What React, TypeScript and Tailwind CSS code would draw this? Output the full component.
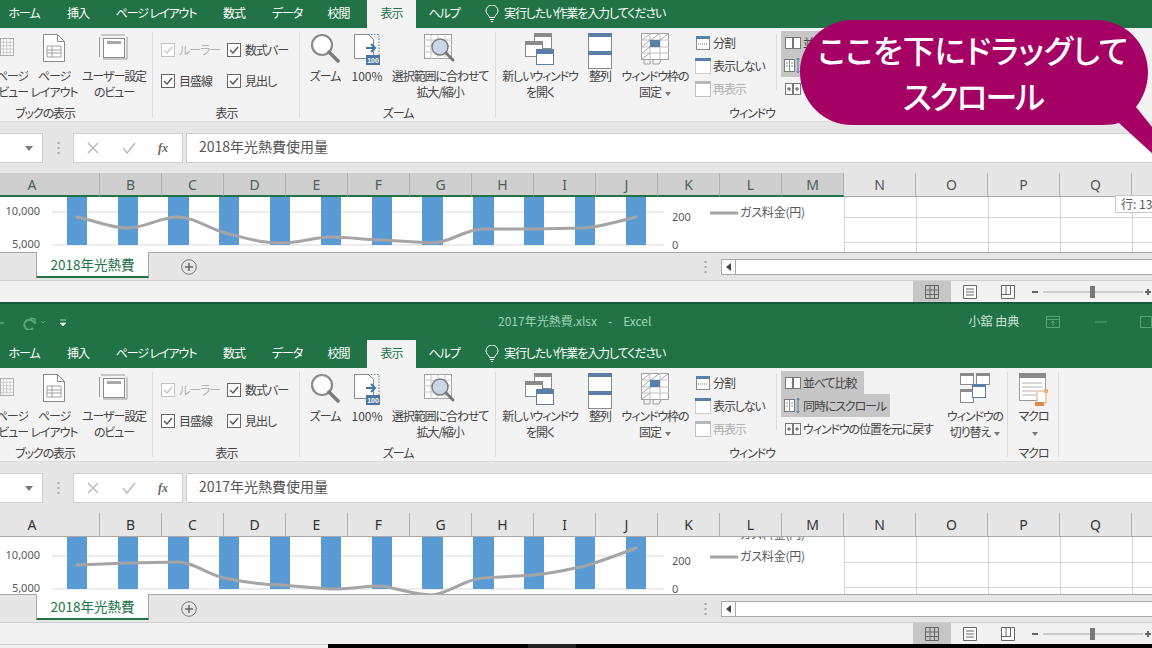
import React from "react";

const B = "#5b7fa6";
const G = "#8a8a8a";

function PageBreakIcon() {
  return (
    <svg width="30" height="28" viewBox="0 0 30 28">
      <rect x="0.5" y="1.5" width="20" height="25" fill="#fff" stroke={G} />
      <path d="M0 7h20M0 12h20M0 17h20M0 22h20M5 2v24M10 2v24M15 2v24" stroke="#b5b5b5" />
    </svg>
  );
}
function PageLayoutIcon() {
  return (
    <svg width="24" height="30" viewBox="0 0 24 30">
      <path d="M1.5 1.5h14l7 7v20h-21z" fill="#fff" stroke={G} />
      <path d="M15.5 1.5v7h7" fill="none" stroke={G} />
      <path d="M5 13h14v11H5zM5 17h14M5 20h14M10 13v11" fill="none" stroke="#a0a0a0" />
    </svg>
  );
}
function CustomViewIcon() {
  return (
    <svg width="30" height="28" viewBox="0 0 30 28">
      <path d="M2 2h24M28 4v22M0.5 4v20M4 26h24" stroke="#9a9a9a" fill="none" />
      <rect x="4.5" y="5.5" width="21" height="19" fill="#fff" stroke="#8a8a8a" />
      <rect x="8" y="8" width="14" height="3" fill="#a8a8a8" />
    </svg>
  );
}
function ZoomIcon() {
  return (
    <svg width="30" height="30" viewBox="0 0 30 30">
      <circle cx="12" cy="12" r="10" fill="#fff" stroke="#8a8a8a" strokeWidth="2.2" />
      <path d="M19 19l9 9" stroke="#7a7a7a" strokeWidth="3.5" strokeLinecap="round" />
    </svg>
  );
}
function Zoom100Icon() {
  return (
    <svg width="28" height="32" viewBox="0 0 28 32">
      <path d="M1.5 1.5h14l5 5v19h-19z" fill="#fff" stroke={G} />
      <path d="M15 1.5h11v21" fill="none" stroke={B} strokeDasharray="1.5 1.5" />
      <path d="M13 15h9M18 11l4 4-4 4" fill="none" stroke="#3f74ad" strokeWidth="2" />
      <rect x="13" y="22" width="14" height="10" fill="#4b76a3" />
      <text x="20" y="30" textAnchor="middle" fontSize="7" fontWeight="700" fill="#fff" fontFamily="Liberation Sans">100</text>
    </svg>
  );
}
function ZoomSelIcon() {
  return (
    <svg width="32" height="30" viewBox="0 0 32 30">
      <rect x="0.5" y="1.5" width="27" height="24" fill="#fff" stroke="#a0a0a0" />
      <path d="M0 7h28M0 13h28M0 19h28M7 2v24M14 2v24M21 2v24" stroke="#c8c8c8" />
      <circle cx="16" cy="14" r="8" fill="#c7d3e5" fillOpacity="0.9" stroke="#7a7a7a" strokeWidth="1.5" />
      <path d="M22 20l7 7" stroke="#777" strokeWidth="3" strokeLinecap="round" />
    </svg>
  );
}
function NewWindowIcon() {
  return (
    <svg width="30" height="32" viewBox="0 0 30 32">
      <rect x="9.5" y="0.5" width="17" height="15" fill="#fff" stroke="#8a8a8a" />
      <rect x="9" y="0" width="18" height="4" fill="#8a8a8a" />
      <rect x="0.5" y="8.5" width="17" height="15" fill="#fff" stroke="#8a8a8a" />
      <rect x="0" y="8" width="18" height="4" fill="#8a8a8a" />
      <rect x="11.5" y="16.5" width="17" height="15" fill="#fff" stroke={B} />
      <rect x="11" y="16" width="18" height="5" fill={B} />
    </svg>
  );
}
function ArrangeIcon() {
  return (
    <svg width="24" height="36" viewBox="0 0 24 36">
      <rect x="0.5" y="0.5" width="23" height="35" fill="#fff" stroke="#8a8a8a" />
      <rect x="0" y="0" width="24" height="4" fill={B} />
      <rect x="0" y="18" width="24" height="4" fill={B} />
    </svg>
  );
}
function FreezeIcon() {
  return (
    <svg width="28" height="32" viewBox="0 0 28 32">
      <rect x="0.5" y="0.5" width="27" height="26" fill="#fff" stroke="#a0a0a0" />
      <path d="M0 7h28M0 14h28M0 20h28M9 0v27M19 0v27" stroke="#c0c0c0" />
      <path d="M1 7l8-6M1 14l8-7M1 20l8-6M1 26l8-6M10 7l8-6M19 7l8-6" stroke="#a8a8a8" />
      <rect x="9" y="7" width="10" height="7" fill={B} />
      <path d="M3 27v4h6v-4M12 27v4h6l2-4" fill="none" stroke="#a0a0a0" />
    </svg>
  );
}
function SwitchIcon() {
  return (
    <svg width="30" height="30" viewBox="0 0 30 30">
      <rect x="0.5" y="0.5" width="13" height="11" fill="#fff" stroke="#8a8a8a" />
      <rect x="0" y="0" width="14" height="3" fill="#8a8a8a" />
      <rect x="16.5" y="0.5" width="13" height="11" fill="#fff" stroke="#8a8a8a" />
      <rect x="16" y="0" width="14" height="3" fill="#8a8a8a" />
      <rect x="0.5" y="16.5" width="13" height="13" fill="#fff" stroke="#8a8a8a" />
      <rect x="0" y="16" width="14" height="3" fill="#8a8a8a" />
      <rect x="12.5" y="11.5" width="13" height="13" fill="#fff" stroke={B} />
      <rect x="12" y="11" width="14" height="3" fill={B} />
    </svg>
  );
}
function MacroIcon() {
  return (
    <svg width="30" height="34" viewBox="0 0 30 34">
      <rect x="0.5" y="0.5" width="26" height="27" fill="#fff" stroke="#9a9a9a" />
      <rect x="0" y="0" width="27" height="5" fill="#8a8a8a" />
      <path d="M3 10h20M3 14h20M3 18h14M3 22h14" stroke="#b0b0b0" />
      <path d="M18 18h9v12h-9z" fill="#fff" stroke="#e2a471" />
      <path d="M16 29h9v4h-9z" fill="#d98a4c" />
      <path d="M25 16h4v4h-4z" fill="#eab184" />
    </svg>
  );
}

function Small({ kind }: { kind: string }) {
  if (kind === "split")
    return (
      <svg width="14" height="14" viewBox="0 0 14 14">
        <rect x="0.5" y="0.5" width="13" height="13" fill="#fff" stroke="#8a8a8a" />
        <rect x="0" y="0" width="14" height="3" fill={B} />
        <path d="M2 8h10" stroke="#777" strokeDasharray="1 1" />
      </svg>
    );
  if (kind === "hide")
    return (
      <svg width="16" height="16" viewBox="0 0 16 16">
        <rect x="0.5" y="0.5" width="15" height="15" fill="#fff" stroke="#a0a0a0" strokeDasharray="1 1" />
        <rect x="0" y="0" width="16" height="3" fill={B} />
      </svg>
    );
  if (kind === "show")
    return (
      <svg width="16" height="16" viewBox="0 0 16 16">
        <rect x="0.5" y="0.5" width="15" height="15" fill="#fff" stroke="#c0c0c0" />
        <rect x="0" y="0" width="16" height="3" fill="#b8b8b8" />
      </svg>
    );
  if (kind === "compare")
    return (
      <svg width="16" height="13" viewBox="0 0 16 13">
        <rect x="0.5" y="1.5" width="7" height="11" fill="#fff" stroke="#777" />
        <rect x="8.5" y="1.5" width="7" height="11" fill="#fff" stroke="#777" />
      </svg>
    );
  if (kind === "sync")
    return (
      <svg width="17" height="17" viewBox="0 0 17 17">
        <rect x="0.5" y="2.5" width="10" height="12" fill="#fff" stroke="#777" />
        <path d="M5.5 3v11M2 6h2M2 9h2M7 6h2M7 9h2" stroke="#888" />
        <path d="M14 1v15M12.5 3L14 1l1.500 2M12.500 14l1.500 2 1.500-2" fill="none" stroke="#4f7eae" />
      </svg>
    );
  return (
    <svg width="16" height="13" viewBox="0 0 16 13">
      <rect x="0.5" y="1.5" width="7" height="11" fill="#fff" stroke="#777" />
      <rect x="8.5" y="1.5" width="7" height="11" fill="#fff" stroke="#777" />
      <path d="M2 7h4M4 5v4M10 7h4M12 5v4" stroke="#555" />
    </svg>
  );
}

function Big({ w, icon, lines }: { w: string; icon: React.ReactNode; lines: React.ReactNode[] }) {
  return (
    <div className={`${w} shrink-0 flex flex-col items-center pt-[5px]`}>
      <div className="h-[35px] flex items-start justify-center">{icon}</div>
      <div className="text-[12px] leading-[16px] tracking-[-1.1px] text-center text-[#444] whitespace-nowrap">
        {lines.map((l, i) => (
          <div key={i}>{l}</div>
        ))}
      </div>
    </div>
  );
}

function Check({ label, disabled }: { label: string; disabled?: boolean }) {
  return (
    <div className={`flex items-center gap-[4px] text-[12px] tracking-[-1px] ${disabled ? "text-[#b4b4b4]" : "text-[#444]"}`}>
      <svg width="14" height="14" viewBox="0 0 14 14">
        <rect x="0.5" y="0.5" width="13" height="13" fill="#fff" stroke={disabled ? "#c4c4c4" : "#666"} />
        <path d="M3 7l3 3 5-6" fill="none" stroke={disabled ? "#c4c4c4" : "#555"} strokeWidth="1.4" />
      </svg>
      <span>{label}</span>
    </div>
  );
}

function Group({ w, caption, children, capClass = "" }: { w: string; caption: string; children: React.ReactNode; capClass?: string }) {
  return (
    <div className={`${w} shrink-0 h-[94px] relative flex flex-col`}>
      <div className="flex-1 flex min-h-0">{children}</div>
      <div className={`h-[18px] text-[12px] leading-[18px] tracking-[-1.1px] text-center text-[#444] ${capClass}`}>{caption}</div>
      <div className="absolute right-0 top-[4px] bottom-[5px] w-px bg-[#dcdcdc]" />
    </div>
  );
}

function Row({ kind, label, muted, hl, pad }: { kind: string; label: string; muted?: boolean; hl?: string; pad?: string }) {
  return (
    <div className={`h-[23px] flex items-center gap-[2px] text-[12px] tracking-[-1.1px] whitespace-nowrap ${pad ?? "pl-[3px]"} ${muted ? "text-[#b0b0b0]" : "text-[#444]"} ${hl ?? ""}`}>
      <span className="w-[17px] flex justify-center">
        <Small kind={kind} />
      </span>
      {label}
    </div>
  );
}

const Caret = () => (
  <svg width="6" height="4" viewBox="0 0 6 4" className="inline-block ml-[4px] align-middle">
    <path d="M0 0h6L3 4z" fill="#777" />
  </svg>
);

function Ribbon() {
  return (
    <div className="h-[94px] bg-[#f3f3f3] border-b border-[#dcdcdc] flex overflow-hidden">
      <Group w="w-[153px]" caption="ブックの表示" capClass="pr-[63px]">
        <div className="w-[28px] shrink-0 pt-[5px] flex flex-col items-end overflow-hidden">
          <div className="h-[35px] w-[28px] flex justify-end pr-[8px]"><PageBreakIcon /></div>
          <div className="text-[12px] leading-[16px] tracking-[-1.1px] text-right text-[#444] whitespace-nowrap">
            <div>ページ</div>
            <div>プレビュー</div>
          </div>
        </div>
        <Big w="w-[52px]" icon={<PageLayoutIcon />} lines={["ページ", "レイアウト"]} />
        <Big w="w-[68px]" icon={<CustomViewIcon />} lines={["ユーザー設定", "のビュー"]} />
      </Group>
      <Group w="w-[147px]" caption="表示">
        <div className="grid grid-cols-[66px_auto] grid-rows-[31px_31px] items-center pl-[8px] pt-[6px]">
          <Check label="ルーラー" disabled />
          <Check label="数式バー" />
          <Check label="目盛線" />
          <Check label="見出し" />
        </div>
      </Group>
      <Group w="w-[196px]" caption="ズーム">
        <Big w="w-[50px]" icon={<ZoomIcon />} lines={["ズーム"]} />
        <Big w="w-[34px]" icon={<Zoom100Icon />} lines={[<span key="p" className="tracking-normal">100%</span>]} />
        <Big w="w-[112px]" icon={<ZoomSelIcon />} lines={["選択範囲に合わせて", "拡大/縮小"]} />
      </Group>
      <Group w="w-[512px]" caption="ウィンドウ">
        <Big w="w-[88px]" icon={<NewWindowIcon />} lines={["新しいウィンドウ", "を開く"]} />
        <Big w="w-[32px]" icon={<ArrangeIcon />} lines={["整列"]} />
        <Big w="w-[78px]" icon={<FreezeIcon />} lines={["ウィンドウ枠の", <span key="k">固定<Caret /></span>]} />
        <div className="w-[82px] shrink-0 pt-[3px]">
          <Row kind="split" label="分割" pad="pl-0" />
          <Row kind="hide" label="表示しない" pad="pl-0" />
          <Row kind="show" label="再表示" muted pad="pl-0" />
        </div>
        <div className="w-px h-[56px] mt-[6px] bg-[#dcdcdc] mr-[4px]" />
        <div className="w-[161px] shrink-0 pt-[3px] flex flex-col items-start">
          <Row kind="compare" label="並べて比較" hl="bg-[#c6c6c6] pr-[8px]" />
          <Row kind="sync" label="同時にスクロール" hl="bg-[#c6c6c6] pr-[4px]" />
          <Row kind="restore" label="ウィンドウの位置を元に戻す" />
        </div>
        <div className="w-[66px] shrink-0 flex">
          <Big w="w-[66px]" icon={<SwitchIcon />} lines={["ウィンドウの", <span key="k">切り替え<Caret /></span>]} />
        </div>
      </Group>
      <Group w="w-[51px]" caption="マクロ">
        <Big w="w-[51px]" icon={<MacroIcon />} lines={["マクロ", <Caret key="a" />]} />
      </Group>
    </div>
  );
}

function Tabs() {
  const items: [string, string][] = [
    ["ホーム", "w-[48px]"],
    ["挿入", "w-[60px]"],
    ["ページ レイアウト", "w-[96px]"],
    ["数式", "w-[60px]"],
    ["データ", "w-[46px]"],
    ["校閲", "w-[57px]"],
    ["表示", "w-[49px]"],
    ["ヘルプ", "w-[56px]"],
  ];
  return (
    <div className="h-[28px] bg-[#217346] flex items-stretch text-[12px] tracking-[-1.1px] text-white">
      {items.map(([t, w]) => (
        <div
          key={t}
          className={`${w} shrink-0 flex items-center justify-center whitespace-nowrap pb-[2px] ${t === "表示" ? "bg-[#f3f3f3] text-[#217346]" : ""}`}
        >
          {t}
        </div>
      ))}
      <div className="flex items-center gap-[5px] ml-[13px] pb-[2px]">
        <svg width="14" height="17" viewBox="0 0 14 17">
          <path d="M4.500 12.500c0-2-3.500-3.500-3.500-6.500a6 6 0 0 1 12 0c0 3-3.500 4.500-3.500 6.500z" fill="none" stroke="#fff" />
          <path d="M5 14.500h4M6 16.500h2" stroke="#fff" />
        </svg>
        <span>実行したい作業を入力してください</span>
      </div>
    </div>
  );
}

function FormulaBar({ text }: { text: string }) {
  return (
    <div className="h-[51px] bg-[#e6e6e6] pt-[11px] flex items-start">
      <div className="w-[43px] h-[30px] bg-white border border-l-0 border-[#cfcfcf] flex items-center justify-end pr-[9px]">
        <svg width="8" height="5" viewBox="0 0 8 5"><path d="M0 0h8L4 5z" fill="#777" /></svg>
      </div>
      <div className="w-[30px] h-[30px] flex items-center justify-center">
        <svg width="3" height="12" viewBox="0 0 3 12">
          <path d="M1.500 0v2M1.500 5v2M1.500 10v2" stroke="#a8a8a8" strokeWidth="2" />
        </svg>
      </div>
      <div className="w-[110px] h-[30px] bg-white border border-[#cfcfcf] flex items-center text-[#b8b8b8]">
        <span className="w-[38px] flex justify-center">
          <svg width="12" height="12" viewBox="0 0 12 12"><path d="M1 1l10 10M11 1L1 11" stroke="#bcbcbc" strokeWidth="1.500" /></svg>
        </span>
        <span className="w-[34px] flex justify-center">
          <svg width="14" height="12" viewBox="0 0 14 12"><path d="M1 6l4 5 8-10" fill="none" stroke="#bcbcbc" strokeWidth="1.500" /></svg>
        </span>
        <span className="w-[34px] text-center text-[12px] italic font-['Liberation_Serif',serif] font-bold text-[#666]">fx</span>
      </div>
      <div className="flex-1 ml-[3px] h-[30px] bg-white border border-r-0 border-[#cfcfcf] flex items-center pl-[12px] pb-[3px] text-[14px] text-[#555]">
        {text}
      </div>
    </div>
  );
}

const ColsA = ["B", "C", "D", "E", "F", "G", "H", "I", "J", "K", "L", "M"];
const ColsB = ["N", "O", "P", "Q", ""];

function ColHeaders({ active }: { active: boolean }) {
  const sel = active ? "bg-[#cfcfcf] text-[#4d615b] border-b-2 border-b-[#217346]" : "bg-[#e6e6e6] text-[#333] border-b border-b-[#a8a8a8]";
  return (
    <div className="h-[24px] flex text-[14px] font-['Noto_Sans',sans-serif] overflow-hidden">
      <div className={`w-[135px] -ml-[35px] shrink-0 border-r border-r-[#b0b0b0] flex items-center justify-center ${sel}`}>A</div>
      {ColsA.map((c) => (
        <div key={c} className={`w-[62px] shrink-0 border-r border-r-[#b0b0b0] flex items-center justify-center ${sel}`}>{c}</div>
      ))}
      {ColsB.map((c, i) => (
        <div key={i} className={`w-[72px] shrink-0 bg-[#e6e6e6] border-r border-r-[#b0b0b0] border-b border-b-[#a8a8a8] flex items-center justify-center ${active ? "text-[#555]" : "text-[#333]"}`}>{c}</div>
      ))}
    </div>
  );
}

const bars: [number, number][] = [[67, 20], [118, 20], [168, 21], [219, 20], [270, 20], [321, 20], [372, 20], [422, 21], [473, 21], [524, 20], [575, 20], [626, 20]];

function Chart({ h, gy1, gy2, line, ghost }: { h: number; gy1: number; gy2: number; line: string; ghost?: boolean }) {
  return (
    <svg width="844" height={h} viewBox={`0 0 844 ${h}`} className="block shrink-0" fontFamily="'Noto Sans','Noto Sans CJK JP',sans-serif">
      <rect width="844" height={h} fill="#fff" />
      <path d={`M52 ${gy1}H664M52 ${gy2}H664`} stroke="#d9d9d9" />
      {bars.map(([x, w]) => (
        <rect key={x} x={x} y="0" width={w} height={gy2} fill="#5b9bd5" />
      ))}
      <path d={line} fill="none" stroke="#a5a5a5" strokeWidth="3" strokeLinejoin="round" strokeLinecap="round" />
      <text x="40" y={gy1 + 3} textAnchor="end" fontSize="11" fill="#595959">10,000</text>
      <text x="40" y={gy2 + 3} textAnchor="end" fontSize="11" fill="#595959">5,000</text>
      <text x="672" y={gy1 + 9} fontSize="11" fill="#595959">200</text>
      <text x="672" y={gy2 + 4} fontSize="11" fill="#595959">0</text>
      <path d={`M710 ${gy1 + 1}h28`} stroke="#a5a5a5" strokeWidth="3" />
      <text x="740" y={gy1 + 5} fontSize="12" letterSpacing="-0.2" fill="#595959" fontFamily="'Noto Sans CJK JP',sans-serif">ガス料金(円)</text>
      {ghost && <text x="740" y="2" fontSize="12" letterSpacing="-0.2" fill="#595959" fontFamily="'Noto Sans CJK JP',sans-serif">ガス料金(円)</text>}
    </svg>
  );
}

function Grid({ h, y1, y2 }: { h: number; y1: number; y2: number }) {
  return (
    <div className="flex-1 flex bg-white overflow-hidden border-l border-[#d4d4d4]" style={{ height: h }}>
      {[0, 1, 2, 3, 4].map((i) => (
        <div key={i} className="w-[72px] shrink-0 border-r border-[#d4d4d4] relative">
          <div className="absolute left-0 right-0 h-px bg-[#d4d4d4]" style={{ top: y1 }} />
          <div className="absolute left-0 right-0 h-px bg-[#d4d4d4]" style={{ top: y2 }} />
        </div>
      ))}
    </div>
  );
}

function SheetTabs({ h }: { h: number }) {
  return (
    <div className="bg-[#e6e6e6] border-t border-b border-[#a8a8a8] border-b-[#cfcfcf] flex items-start box-border" style={{ height: h }}>
      <div className="ml-[36px] w-[111px] h-[24px] -mt-px bg-white border-l border-r border-[#a8a8a8] border-b-2 border-b-[#217346] text-[13.5px] text-[#217346] flex items-center justify-center box-content">
        2018年光熱費
      </div>
      <div className="ml-[32px] mt-[6px]">
        <svg width="16" height="16" viewBox="0 0 16 16">
          <circle cx="8" cy="8" r="7.300" fill="none" stroke="#777" />
          <path d="M4 8h8M8 4v8" stroke="#666" strokeWidth="1.500" />
        </svg>
      </div>
      <div className="ml-[507px] mt-[8px]">
        <svg width="3" height="12" viewBox="0 0 3 12">
          <path d="M1.500 0v2M1.500 5v2M1.500 10v2" stroke="#a8a8a8" strokeWidth="2" />
        </svg>
      </div>
      <div className="ml-[14px] mt-[6px] flex-1 h-[16px] bg-white border border-r-0 border-[#a8a8a8] flex">
        <div className="w-[14px] border-r border-[#a8a8a8] flex items-center justify-center">
          <svg width="5" height="8" viewBox="0 0 5 8"><path d="M5 0v8L0 4z" fill="#444" /></svg>
        </div>
      </div>
    </div>
  );
}

function Status({ h }: { h: number }) {
  return (
    <div className="bg-[#f1f1f1] flex justify-end items-stretch" style={{ height: h }}>
      <div className="w-[38px] bg-[#c6c6c6] flex items-center justify-center">
        <svg width="14" height="14" viewBox="0 0 14 14"><path d="M.5.500h13v13H.5zM.5 5h13M.5 9.500h13M5 .500v13M9.500.500v13" fill="none" stroke="#666" /></svg>
      </div>
      <div className="w-[38px] flex items-center justify-center">
        <svg width="14" height="14" viewBox="0 0 14 14"><path d="M.5.500h13v13H.5z" fill="#fff" stroke="#666" /><path d="M3 4h8M3 7h8M3 10h8" stroke="#666" /></svg>
      </div>
      <div className="w-[38px] flex items-center justify-center">
        <svg width="14" height="14" viewBox="0 0 14 14"><path d="M.5.500h13v13H.5z" fill="#fff" stroke="#666" /><path d="M.5 9.500H10M5 .500V9.500M9.500.500V9.500" fill="none" stroke="#666" /></svg>
      </div>
      <div className="w-[125px] shrink-0 flex items-center pl-[5px]">
        <svg width="120" height="12" viewBox="0 0 120 12">
          <path d="M0 6h6" stroke="#666" strokeWidth="2" />
          <path d="M11 6h100" stroke="#aaa" />
          <rect x="58" y="0" width="5" height="12" fill="#777" />
          <path d="M113 6h6M116 3v6" stroke="#666" strokeWidth="2" />
        </svg>
      </div>
    </div>
  );
}

function TitleBar() {
  return (
    <div className="h-[36px] bg-[#217346] flex items-center text-[12px] text-[#9fd3b4]">
      <svg width="70" height="16" viewBox="0 0 70 16" className="shrink-0">
        <path d="M0 9h4" stroke="#5aa57c" strokeWidth="1.500" />
        <path d="M34 8a5 5 0 1 0-1 5" fill="none" stroke="#5aa57c" strokeWidth="2" transform="translate(0 1)" />
        <path d="M30 4l5 1 0 5" fill="none" stroke="#5aa57c" strokeWidth="1.500" />
        <path d="M41 7l2 2 2-2" fill="none" stroke="#5aa57c" />
        <path d="M60 6h6M60 9h6l-3 3z" fill="#e6f2ea" stroke="#e6f2ea" strokeWidth="0.700" />
      </svg>
      <div className="ml-[428px] w-[154px] flex justify-between whitespace-nowrap pb-[2px]">
        <span>2017年光熱費.xlsx</span>
        <span>-</span>
        <span>Excel</span>
      </div>
      <div className="ml-[317px] whitespace-nowrap text-[#cfe6d8] pb-[2px]">小舘 由典</div>
      <svg width="14" height="12" viewBox="0 0 14 12" className="ml-[27px]">
        <path d="M.5.500h13v11H.5zM.5 3.500h13M7 5v5M5 7l2-2 2 2" fill="none" stroke="#5aa57c" />
      </svg>
      <svg width="12" height="2" viewBox="0 0 12 2" className="ml-[35px]"><path d="M0 1h12" stroke="#5aa57c" /></svg>
      <svg width="12" height="12" viewBox="0 0 12 12" className="ml-[33px]"><path d="M.500.500h11v11H.500z" fill="none" stroke="#5aa57c" /></svg>
    </div>
  );
}

const line1 = "M77 20C100 25 110 31 128 31C145 31 160 20 178 20C195 20 210 33 229 37C250 42 262 46 280 46C300 46 315 40 331 40C350 40 365 43 382 43L432 46C450 46 465 32 483 32L534 32L585 31C605 29 620 24 636 20";
const line2 = "M77 28L128 26L178 25C195 25 210 40 229 42C250 46 262 48 280 48L331 52C350 52 365 49 382 49C400 52 415 58 432 58C450 56 465 42 483 41L534 38C555 36 570 32 585 29C605 23 620 17 636 11";

export default function App() {
  return (
    <div className="w-[1152px] h-[648px] overflow-hidden relative bg-white font-['Noto_Sans_CJK_JP','Liberation_Sans',sans-serif] [font-feature-settings:'palt']">
      <Tabs />
      <Ribbon />
      <FormulaBar text="2018年光熱費使用量" />
      <ColHeaders active />
      <div className="flex h-[55px] overflow-hidden">
        <Chart h={55} gy1={15} gy2={48} line={line1} />
        <Grid h={55} y1={20} y2={45} />
      </div>
      <SheetTabs h={29} />
      <Status h={21} />
      <div className="h-[2px] bg-[#15593a]" />

      <TitleBar />
      <Tabs />
      <Ribbon />
      <FormulaBar text="2017年光熱費使用量" />
      <ColHeaders active={false} />
      <div className="flex h-[57px] overflow-hidden">
        <Chart h={57} gy1={19} gy2={52} line={line2} ghost />
        <Grid h={57} y1={25} y2={50} />
      </div>
      <SheetTabs h={29} />
      <Status h={21} />
      <div className="h-[4px] flex">
        <div className="w-[328px] bg-[#f1f1f1] border-t border-[#cfcfcf]" />
        <div className="w-[200px] bg-black" />
        <div className="w-[48px] bg-[#222]" />
        <div className="flex-1 bg-black" />
      </div>

      <div className="absolute left-[1115px] top-[195px] w-[50px] h-[18px] bg-white border border-[#c8c8c8] text-[12px] leading-[16px] pl-[5px] text-[#555] whitespace-nowrap">行: 13</div>

      <svg width="360" height="142" viewBox="0 0 360 142" className="absolute left-[796px] top-[16px]">
        <path
          d="M56 4H300C330 4 352 28 352 56C352 70 347 82 340 91L360 116V141L323 107C316 109 308 109 300 109H56C28 109 4 86 4 56C4 28 28 4 56 4Z"
          fill="#a50064"
        />
      </svg>
      <div className="absolute left-[800px] top-[26px] w-[346px] text-center text-white text-[32px] leading-[46px] font-medium whitespace-nowrap">
        <div>ここを下にドラッグして</div>
        <div className="tracking-[-2px]">スクロール</div>
      </div>
    </div>
  );
}
